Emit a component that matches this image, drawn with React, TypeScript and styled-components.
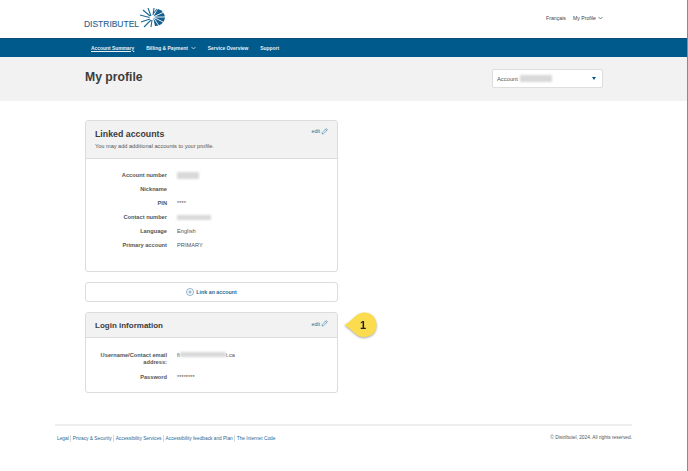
import React from "react";
import styled, { createGlobalStyle } from "styled-components";

const Global = createGlobalStyle`
  html, body { margin: 0; padding: 0; background: #fff; }
  body { font-family: "Liberation Sans", Arial, sans-serif; color: #444; -webkit-font-smoothing: antialiased; }
`;

const Page = styled.div`
  width: 688px;
  height: 471px;
  overflow: hidden;
  display: flex;
  flex-direction: column;
  box-sizing: border-box;
  border-right: 1px solid #8a8a8a;
`;

const TopBar = styled.header`
  height: 38px;
  flex: none;
  display: flex;
  align-items: center;
  justify-content: space-between;
  padding: 0 84px 2px 84px;
  box-sizing: border-box;
`;

const Utility = styled.div`
  display: flex;
  align-items: center;
  gap: 7px;
  font-size: 5.2px;
  color: #444;
`;

const UtilityLink = styled.span`
  display: inline-flex;
  align-items: center;
  gap: 2px;
`;

const Nav = styled.nav`
  height: 19px;
  flex: none;
  background: #005a8c;
  border-top: 1px solid #0b4f78;
  box-sizing: border-box;
  display: flex;
  align-items: center;
  gap: 12px;
  padding-left: 91px;
`;

const NavItem = styled.a<{ $active?: boolean }>`
  display: inline-flex;
  align-items: center;
  gap: 3px;
  font-size: 4.9px;
  font-weight: 700;
  color: #e8f0f5;
  text-decoration: ${(p) => (p.$active ? "underline" : "none")};
`;

const Band = styled.div`
  height: 44px;
  flex: none;
  background: #f2f2f2;
  display: flex;
  align-items: center;
  justify-content: space-between;
  padding: 0 84px 0 85px;
  box-sizing: border-box;
`;

const Title = styled.h1`
  margin: 0 0 4px;
  font-size: 12.2px;
  font-weight: 700;
  color: #3c3c3c;
`;

const Select = styled.div`
  width: 111px;
  height: 19px;
  margin-bottom: 1px;
  box-sizing: border-box;
  background: #fff;
  border: 1px solid #dedede;
  border-radius: 2px;
  display: flex;
  align-items: center;
  padding: 0 6px 0 4px;
  font-size: 5.8px;
  color: #555;
  gap: 2px;
`;

const Caret = styled.span`
  margin-left: auto;
  width: 0;
  height: 0;
  border-left: 2.5px solid transparent;
  border-right: 2.5px solid transparent;
  border-top: 3px solid #005a8c;
`;

const Blur = styled.span<{ $w: number; $h?: number }>`
  display: inline-block;
  flex: none;
  width: ${(p) => p.$w}px;
  height: ${(p) => p.$h ?? 5}px;
  background: #d9d9d9;
  filter: blur(1.2px);
  vertical-align: middle;
`;

const Main = styled.main`
  flex: none;
  width: 253px;
  margin: 19px 0 0 85px;
  display: flex;
  flex-direction: column;
  gap: 10px;
`;

const Card = styled.section<{ $h: number }>`
  position: relative;
  height: ${(p) => p.$h}px;
  box-sizing: border-box;
  border: 1px solid #dcdcdc;
  border-radius: 3px;
  background: #fff;
  display: flex;
  flex-direction: column;
`;

const CardHead = styled.div<{ $h: number; $bottom?: number }>`
  height: ${(p) => p.$h}px;
  flex: none;
  box-sizing: border-box;
  background: #f2f2f2;
  border-bottom: 1px solid #dcdcdc;
  border-radius: 3px 3px 0 0;
  padding: 0 9px ${(p) => p.$bottom ?? 0}px;
  display: flex;
  flex-direction: column;
  justify-content: center;
  gap: 4px;
`;

const HeadRow = styled.div`
  display: flex;
  align-items: center;
  justify-content: space-between;
`;

const CardTitle = styled.h2<{ $size: number }>`
  margin: 0;
  font-size: ${(p) => p.$size}px;
  font-weight: 700;
  color: #3c3c3c;
`;

const Edit = styled.a<{ $lift: number }>`
  display: inline-flex;
  align-items: center;
  gap: 1px;
  font-size: 5.3px;
  color: #1f6a96;
  margin-top: -${(p) => p.$lift}px;
`;

const Sub = styled.p`
  margin: 0;
  font-size: 5.6px;
  color: #555;
`;

const Rows = styled.dl<{ $top: number; $gap: number }>`
  margin: 0;
  padding: ${(p) => p.$top}px 0 0;
  display: grid;
  grid-template-columns: 81px 1fr;
  column-gap: 10px;
  row-gap: ${(p) => p.$gap}px;
  font-size: 5.7px;
  line-height: 7px;
`;

const Term = styled.dt`
  text-align: right;
  font-weight: 700;
  color: #555;
`;

const Value = styled.dd<{ $top?: boolean }>`
  margin: 0;
  color: #555;
  min-height: 7px;
  display: flex;
  align-items: ${(p) => (p.$top ? "flex-start" : "center")};
`;

const LinkBox = styled.a`
  height: 20px;
  flex: none;
  box-sizing: border-box;
  border: 1px solid #dcdcdc;
  border-radius: 3px;
  display: flex;
  align-items: center;
  justify-content: center;
  gap: 2px;
  font-size: 5.3px;
  font-weight: 700;
  color: #1f6a96;
`;

const Callout = styled.svg`
  position: absolute;
  left: 258px;
  top: -1px;
  overflow: visible;
  filter: drop-shadow(0 1px 1px rgba(0, 0, 0, 0.35));
`;

const Footer = styled.footer`
  margin: 31px 55px 0 55px;
  border-top: 2px solid #eeeeee;
  padding: 9px 0 0 2px;
  display: flex;
  justify-content: space-between;
  font-size: 4.8px;
  line-height: 7px;
`;

const Legal = styled.div`
  display: flex;
  color: #1f6a96;
`;

const LegalItem = styled.a`
  padding: 0 1.5px;
  border-left: 1px solid #d8d8d8;
  &:first-child { border-left: 0; padding-left: 0; }
`;

const Copy = styled.div`
  color: #555;
  margin-top: -1px;
`;

const Chevron = ({ color }: { color: string }) => (
  <svg width="5" height="4" viewBox="0 0 10 8" aria-hidden="true">
    <path d="M1 2l4 4 4-4" fill="none" stroke={color} strokeWidth="1.5" />
  </svg>
);

const Pencil = () => (
  <svg width="7" height="7" viewBox="0 0 14 14" aria-hidden="true">
    <path d="M2 12l.8-3.4 6.7-6.8a1.3 1.3 0 0 1 1.9 0l.8.8a1.3 1.3 0 0 1 0 1.9l-6.8 6.7z M8.5 3l2.5 2.5" fill="none" stroke="#1f6a96" strokeWidth="1" />
  </svg>
);

const Logo = () => (
  <svg width="82" height="21" viewBox="0 0 82 21" aria-hidden="true">
    <text x="0" y="18.500" fontFamily="'Liberation Sans', sans-serif" fontSize="9.6" fill="#1f6290" stroke="#1f6290" strokeWidth="0.12" textLength="55" lengthAdjust="spacingAndGlyphs">DISTRIBUTEL</text>
    <path d="M69 9 L74 1 A10 10 0 0 1 81 10 A9.500 9.500 0 0 1 71 18 Z" fill="#155f90" />
    <g stroke="#fff" strokeWidth="0.9">
      <path d="M69 9 L80 4 M69 9 L82 9 M69 9 L79 14 M69 9 L75 18" />
    </g>
    <g stroke="#1c6796" strokeWidth="1.1">
      <path d="M67 8 L64 0 M66 8 L59 2 M65.500 9.500 L56 7 M66 11 L57 14 M67 12 L60 19 M68 12 L67 19 M69 7 L70 0 M69 6 L73 1" />
    </g>
  </svg>
);

const App = () => (
  <>
    <Global />
    <Page>
      <TopBar>
        <Logo />
        <Utility>
          <span>Français</span>
          <UtilityLink>
            My Profile <Chevron color="#555" />
          </UtilityLink>
        </Utility>
      </TopBar>
      <Nav>
        <NavItem $active>Account Summary</NavItem>
        <NavItem>
          Billing &amp; Payment <Chevron color="#e8f0f5" />
        </NavItem>
        <NavItem>Service Overview</NavItem>
        <NavItem>Support</NavItem>
      </Nav>
      <Band>
        <Title>My profile</Title>
        <Select>
          Account <Blur $w={32} $h={7} />
          <Caret />
        </Select>
      </Band>
      <Main>
        <Card $h={152}>
          <CardHead $h={38} $bottom={2}>
            <HeadRow>
              <CardTitle $size={8.8}>Linked accounts</CardTitle>
              <Edit $lift={5}>
                edit <Pencil />
              </Edit>
            </HeadRow>
            <Sub>You may add additional accounts to your profile.</Sub>
          </CardHead>
          <Rows $top={13} $gap={7}>
            <Term>Account number</Term>
            <Value>
              <Blur $w={22} $h={7} />
            </Value>
            <Term>Nickname</Term>
            <Value />
            <Term>PIN</Term>
            <Value>****</Value>
            <Term>Contact number</Term>
            <Value>
              <Blur $w={34} />
            </Value>
            <Term>Language</Term>
            <Value>English</Value>
            <Term>Primary account</Term>
            <Value>PRIMARY</Value>
          </Rows>
        </Card>
        <LinkBox>
          <svg width="8" height="8" viewBox="0 0 16 16" aria-hidden="true">
            <circle cx="8" cy="8" r="7" fill="none" stroke="#1f6a96" strokeWidth="1" />
            <path d="M8 4.500v7M4.500 8h7" stroke="#1f6a96" strokeWidth="1" />
          </svg>
          Link an account
        </LinkBox>
        <Card $h={81}>
          <CardHead $h={25}>
            <HeadRow>
              <CardTitle $size={8}>Login information</CardTitle>
              <Edit $lift={3}>
                edit <Pencil />
              </Edit>
            </HeadRow>
          </CardHead>
          <Rows $top={14} $gap={8}>
            <Term>Username/Contact email address:</Term>
            <Value $top>
              fi
              <Blur $w={46} />
              t.ca
            </Value>
            <Term>Password</Term>
            <Value>********</Value>
          </Rows>
          <Callout width="33" height="26" viewBox="0 0 33 26" aria-hidden="true">
            <path d="M0.500 13 C8 9 12 1 20 0.500 C28 0.500 32.500 6.500 32.500 13 C32.500 19.500 28 25 20 25 C12 25 8 17 0.500 13 Z" fill="#fbdc4e" />
            <text x="16" y="17" fontFamily="'Liberation Sans', sans-serif" fontSize="11" fontWeight="700" fill="#222">1</text>
          </Callout>
        </Card>
      </Main>
      <Footer>
        <Legal>
          <LegalItem>Legal</LegalItem>
          <LegalItem>Privacy &amp; Security</LegalItem>
          <LegalItem>Accessibility Services</LegalItem>
          <LegalItem>Accessibility feedback and Plan</LegalItem>
          <LegalItem>The Internet Code</LegalItem>
        </Legal>
        <Copy>© Distributel, 2024. All rights reserved.</Copy>
      </Footer>
    </Page>
  </>
);

export default App;
